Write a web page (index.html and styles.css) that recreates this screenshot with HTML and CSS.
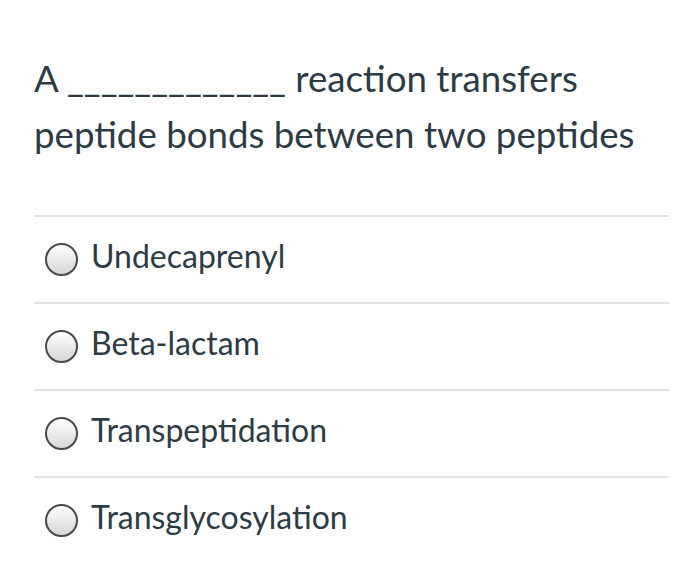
FILE: index.html
```html
<!DOCTYPE html>
<html>
<head>
<meta charset="utf-8">
<link rel="stylesheet" href="styles.css">
</head>
<body>
<div class="quiz">
  <p class="question">A _____________ reaction transfers peptide bonds between two peptides</p>
  <ul class="answers">
    <li class="answer"><span class="radio"></span><span class="label">Undecaprenyl</span></li>
    <li class="answer"><span class="radio"></span><span class="label">Beta-lactam</span></li>
    <li class="answer"><span class="radio"></span><span class="label">Transpeptidation</span></li>
    <li class="answer"><span class="radio"></span><span class="label">Transglycosylation</span></li>
  </ul>
</div>
</body>
</html>
```
FILE: styles.css
```css
html, body {
  margin: 0;
  padding: 0;
  background: #ffffff;
}
body {
  font-family: Lato, "Open Sans", sans-serif;
  color: #2d3b45;
}
.quiz {
  padding: 50px 31px 0 34px;
}
.question {
  margin: 0 0 53px 0;
  font-size: 36.7px;
  line-height: 56px;
  width: 620px;
}
.answers {
  list-style: none;
  margin: 0;
  padding: 0;
}
.answer {
  display: flex;
  align-items: center;
  height: 85px;
  border-top: 2px solid #e2e2e2;
  padding-left: 11px;
}
.radio {
  width: 29px;
  height: 29px;
  border: 2px solid #444a4f;
  border-radius: 50%;
  background: linear-gradient(#ffffff, #d6d6d6);
  flex: none;
  margin-right: 13px;
}
.label {
  font-size: 32px;
  padding-bottom: 8px;
}
```
